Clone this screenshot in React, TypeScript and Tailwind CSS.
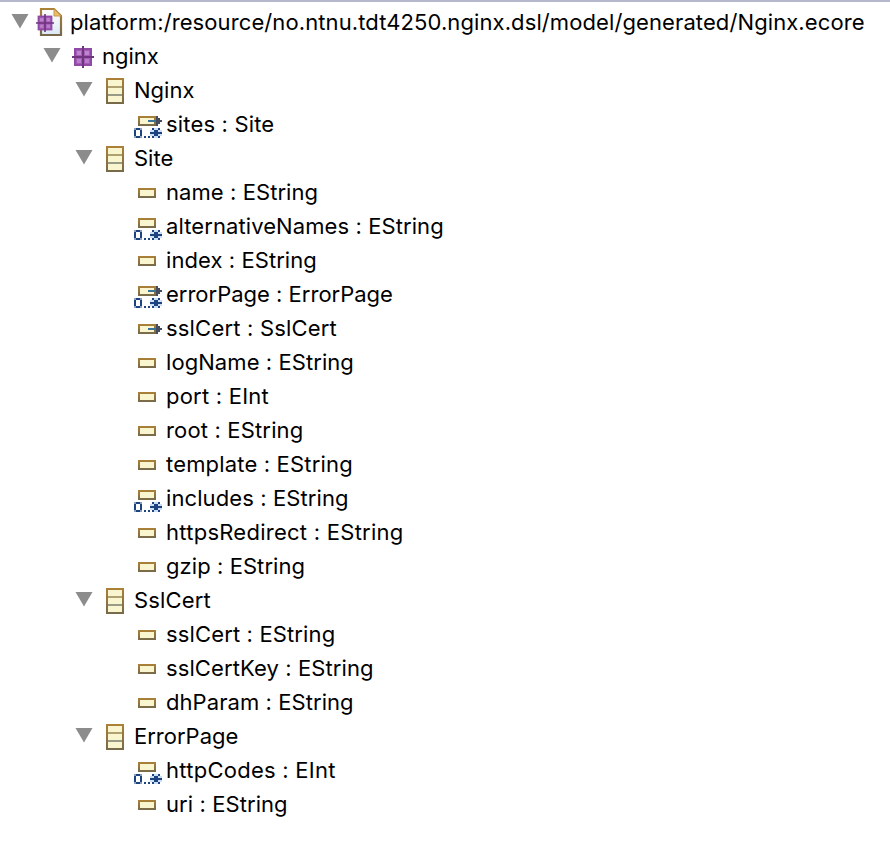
type Kind = 'file' | 'package' | 'class' | 'attribute' | 'attributeMany' | 'reference' | 'referenceMany';

type Row = { level: 0 | 1 | 2 | 3; kind: Kind; label: string; tracking?: string };

const rows: Row[] = [
  { level: 0, kind: 'file', label: 'platform:/resource/no.ntnu.tdt4250.nginx.dsl/model/generated/Nginx.ecore', tracking: 'tracking-[0.1px]' },
  { level: 1, kind: 'package', label: 'nginx' },
  { level: 2, kind: 'class', label: 'Nginx' },
  { level: 3, kind: 'referenceMany', label: 'sites : Site', tracking: 'tracking-[0.17px]' },
  { level: 2, kind: 'class', label: 'Site' },
  { level: 3, kind: 'attribute', label: 'name : EString', tracking: 'tracking-[0.07px]' },
  { level: 3, kind: 'attributeMany', label: 'alternativeNames : EString', tracking: 'tracking-[0.09px]' },
  { level: 3, kind: 'attribute', label: 'index : EString', tracking: 'tracking-[0.07px]' },
  { level: 3, kind: 'referenceMany', label: 'errorPage : ErrorPage' },
  { level: 3, kind: 'reference', label: 'sslCert : SslCert', tracking: 'tracking-[0.19px]' },
  { level: 3, kind: 'attribute', label: 'logName : EString', tracking: 'tracking-[0.07px]' },
  { level: 3, kind: 'attribute', label: 'port : EInt', tracking: 'tracking-[0.22px]' },
  { level: 3, kind: 'attribute', label: 'root : EString', tracking: 'tracking-[0.16px]' },
  { level: 3, kind: 'attribute', label: 'template : EString', tracking: 'tracking-[0.17px]' },
  { level: 3, kind: 'attributeMany', label: 'includes : EString', tracking: 'tracking-[0.1px]' },
  { level: 3, kind: 'attribute', label: 'httpsRedirect : EString', tracking: 'tracking-[0.26px]' },
  { level: 3, kind: 'attribute', label: 'gzip : EString', tracking: 'tracking-[0.07px]' },
  { level: 2, kind: 'class', label: 'SslCert', tracking: 'tracking-[0.14px]' },
  { level: 3, kind: 'attribute', label: 'sslCert : EString', tracking: 'tracking-[0.14px]' },
  { level: 3, kind: 'attribute', label: 'sslCertKey : EString', tracking: 'tracking-[0.1px]' },
  { level: 3, kind: 'attribute', label: 'dhParam : EString', tracking: 'tracking-[0.07px]' },
  { level: 2, kind: 'class', label: 'ErrorPage' },
  { level: 3, kind: 'attributeMany', label: 'httpCodes : EInt', tracking: 'tracking-[0.26px]' },
  { level: 3, kind: 'attribute', label: 'uri : EString', tracking: 'tracking-[0.08px]' },
];

const indents = ['pl-3', 'pl-11', 'pl-[76px]', 'pl-[108px]'];

function PackageMark({ x, y, s = 1 }: { x: number; y: number; s?: number }) {
  return (
    <g transform={`translate(${x} ${y}) scale(${s})`}>
      <rect x="-9" y="-9" width="18" height="18" fill="#9149a6" />
      <rect x="-7" y="-7" width="14" height="14" fill="#a45bb7" />
      <rect x="-6" y="-6" width="4" height="4" fill="#bb86cc" />
      <rect x="2" y="-6" width="4" height="4" fill="#bb86cc" />
      <rect x="-6" y="2" width="4" height="4" fill="#b67ec8" />
      <rect x="2" y="2" width="4" height="4" fill="#b67ec8" />
      <path d="M-11 0H11M0 -11V11" stroke="#70357f" strokeWidth="2" />
    </g>
  );
}

function Box({ y }: { y: number }) {
  return (
    <>
      <rect x="8" y={y} width="18" height="10" fill="url(#gold)" />
      <rect x="10" y={y + 2} width="14" height="6" fill="#f9f6cf" />
    </>
  );
}

function Arrow({ y }: { y: number }) {
  return (
    <>
      <path d={`M18 ${y}H27`} stroke="#3d7496" strokeWidth="2" />
      <path d={`M26 ${y - 5}h2v2h2v2h2v2h-2v2h-2v2h-2z`} fill="#454c5c" />
    </>
  );
}

function Many() {
  return (
    <>
      <path d="M4 21h8v10h-8zM6 23v6h4v-6z" fill="#1d4280" fillRule="evenodd" opacity=".5" />
      <path d="M6 21h4v2h2v6h-2v2h-4v-2h-2v-6h2zM6 23v6h4v-6z" fill="#1d4280" fillRule="evenodd" />
      <path d="M14 29h2v2h-2zM18 29h2v2h-2z" fill="#1d4280" />
      <path d="M20 23h12v6h-12zM22 21h8v10h-8z" fill="#a9c8ee" opacity=".6" />
      <path d="M20 25h12v2h-12zM22 21h2v2h-2zM28 21h2v2h-2zM22 29h2v2h-2zM28 29h2v2h-2zM24 23h4v6h-4z" fill="#1d4280" />
    </>
  );
}

function Icon({ kind }: { kind: Kind }) {
  return (
    <svg className="ml-1.5 h-[34px] w-8 shrink-0" viewBox="0 0 32 34" aria-hidden="true">
      {kind === 'file' && (
        <>
          <path d="M7 4H20L27 11V30H7Z" fill="url(#paper)" stroke="url(#gold)" strokeWidth="2.2" />
          <path d="M20 4V11H27Z" fill="#e9bd68" stroke="#c79a50" />
          <PackageMark x={11} y={18} s={0.82} />
        </>
      )}
      {kind === 'package' && <PackageMark x={17} y={18} />}
      {kind === 'class' && (
        <>
          <rect x="8" y="5" width="18" height="26" fill="url(#gold)" />
          <rect x="10" y="7" width="14" height="22" fill="#f9f6cf" />
          <rect x="10" y="13" width="14" height="2" fill="#afa070" />
          <rect x="10" y="21" width="14" height="2" fill="#999988" />
        </>
      )}
      {kind === 'attribute' && <Box y={13} />}
      {kind === 'attributeMany' && <><Box y={9} /><Many /></>}
      {kind === 'reference' && <><Box y={13} /><Arrow y={18} /></>}
      {kind === 'referenceMany' && <><Box y={9} /><Arrow y={14} /><Many /></>}
    </svg>
  );
}

export default function App() {
  return (
    <main className="h-[848px] w-[890px] overflow-hidden border-t-2 border-[#b5b7cc] bg-white pt-[3px] font-['Inter',sans-serif] text-[22px] text-black [font-feature-settings:'calt'_0]">
      <svg className="block h-0 w-0" aria-hidden="true">
        <defs>
          <linearGradient id="gold" x1="0" y1="0" x2="0" y2="1">
            <stop offset="0" stopColor="#ad8137" />
            <stop offset="1" stopColor="#76694b" />
          </linearGradient>
          <linearGradient id="paper" x1="0" y1="0" x2="0" y2="1">
            <stop offset="0" stopColor="#ffffff" />
            <stop offset="1" stopColor="#dce8f5" />
          </linearGradient>
        </defs>
      </svg>
      <ul>
        {rows.map((row, i) => (
          <li key={i} className={`flex h-[34px] items-center ${indents[row.level]}`}>
            <svg className="h-[34px] w-4 shrink-0 overflow-visible" viewBox="0 0 16 34" aria-hidden="true">
              {row.level < 3 && <path d="M-.5 9H16.5L8 23.5Z" fill="#8c8c8c" />}
            </svg>
            <Icon kind={row.kind} />
            <span className={`ml-1 whitespace-pre leading-[34px] ${row.tracking ?? ''}`}>{row.label}</span>
          </li>
        ))}
      </ul>
    </main>
  );
}
